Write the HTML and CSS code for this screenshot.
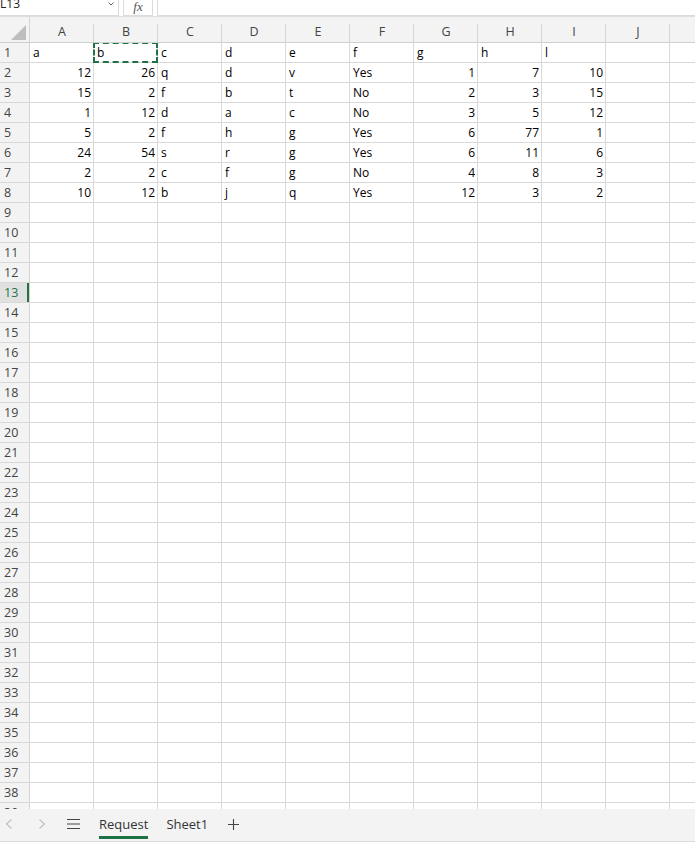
FILE: index.html
```html
<!DOCTYPE html>
<html>
<head>
<meta charset="utf-8">
<link rel="stylesheet" href="styles.css">
</head>
<body>
<div class="fbar">
  <div class="namebox"><span class="nametext">L13</span>
    <svg class="chev" width="6" height="4" viewBox="0 0 6 4"><path d="M0.5 0.5 L3 3 L5.5 0.5" fill="none" stroke="#666" stroke-width="1"/></svg>
  </div>
  <div class="fxbox"><span class="fx">fx</span></div>
  <div class="finput"></div>
</div>
<div class="colhead">
  <div class="corner"><svg width="16" height="15" viewBox="0 0 16 15"><path d="M15 0 L15 15 L0 15 Z" fill="#bdbdbd"/></svg></div>
  <div class="ch">A</div><div class="ch">B</div><div class="ch">C</div><div class="ch">D</div><div class="ch">E</div><div class="ch">F</div><div class="ch">G</div><div class="ch">H</div><div class="ch">I</div><div class="ch">J</div><div class="ch"></div>
</div>
<div class="grid">
  <div class="row"><span class="rh">1</span><span>a</span><span class="marq">b<i class="ants"></i></span><span>c</span><span>d</span><span>e</span><span>f</span><span>g</span><span>h</span><span>l</span><span></span><span></span></div>
  <div class="row"><span class="rh">2</span><span class="n">12</span><span class="n">26</span><span>q</span><span>d</span><span>v</span><span>Yes</span><span class="n">1</span><span class="n">7</span><span class="n">10</span><span></span><span></span></div>
  <div class="row"><span class="rh">3</span><span class="n">15</span><span class="n">2</span><span>f</span><span>b</span><span>t</span><span>No</span><span class="n">2</span><span class="n">3</span><span class="n">15</span><span></span><span></span></div>
  <div class="row"><span class="rh">4</span><span class="n">1</span><span class="n">12</span><span>d</span><span>a</span><span>c</span><span>No</span><span class="n">3</span><span class="n">5</span><span class="n">12</span><span></span><span></span></div>
  <div class="row"><span class="rh">5</span><span class="n">5</span><span class="n">2</span><span>f</span><span>h</span><span>g</span><span>Yes</span><span class="n">6</span><span class="n">77</span><span class="n">1</span><span></span><span></span></div>
  <div class="row"><span class="rh">6</span><span class="n">24</span><span class="n">54</span><span>s</span><span>r</span><span>g</span><span>Yes</span><span class="n">6</span><span class="n">11</span><span class="n">6</span><span></span><span></span></div>
  <div class="row"><span class="rh">7</span><span class="n">2</span><span class="n">2</span><span>c</span><span>f</span><span>g</span><span>No</span><span class="n">4</span><span class="n">8</span><span class="n">3</span><span></span><span></span></div>
  <div class="row"><span class="rh">8</span><span class="n">10</span><span class="n">12</span><span>b</span><span>j</span><span>q</span><span>Yes</span><span class="n">12</span><span class="n">3</span><span class="n">2</span><span></span><span></span></div>
  <div class="row"><span class="rh">9</span><span></span><span></span><span></span><span></span><span></span><span></span><span></span><span></span><span></span><span></span><span></span></div>
  <div class="row"><span class="rh">10</span><span></span><span></span><span></span><span></span><span></span><span></span><span></span><span></span><span></span><span></span><span></span></div>
  <div class="row"><span class="rh">11</span><span></span><span></span><span></span><span></span><span></span><span></span><span></span><span></span><span></span><span></span><span></span></div>
  <div class="row"><span class="rh">12</span><span></span><span></span><span></span><span></span><span></span><span></span><span></span><span></span><span></span><span></span><span></span></div>
  <div class="row sel"><span class="rh">13</span><span></span><span></span><span></span><span></span><span></span><span></span><span></span><span></span><span></span><span></span><span></span></div>
  <div class="row"><span class="rh">14</span><span></span><span></span><span></span><span></span><span></span><span></span><span></span><span></span><span></span><span></span><span></span></div>
  <div class="row"><span class="rh">15</span><span></span><span></span><span></span><span></span><span></span><span></span><span></span><span></span><span></span><span></span><span></span></div>
  <div class="row"><span class="rh">16</span><span></span><span></span><span></span><span></span><span></span><span></span><span></span><span></span><span></span><span></span><span></span></div>
  <div class="row"><span class="rh">17</span><span></span><span></span><span></span><span></span><span></span><span></span><span></span><span></span><span></span><span></span><span></span></div>
  <div class="row"><span class="rh">18</span><span></span><span></span><span></span><span></span><span></span><span></span><span></span><span></span><span></span><span></span><span></span></div>
  <div class="row"><span class="rh">19</span><span></span><span></span><span></span><span></span><span></span><span></span><span></span><span></span><span></span><span></span><span></span></div>
  <div class="row"><span class="rh">20</span><span></span><span></span><span></span><span></span><span></span><span></span><span></span><span></span><span></span><span></span><span></span></div>
  <div class="row"><span class="rh">21</span><span></span><span></span><span></span><span></span><span></span><span></span><span></span><span></span><span></span><span></span><span></span></div>
  <div class="row"><span class="rh">22</span><span></span><span></span><span></span><span></span><span></span><span></span><span></span><span></span><span></span><span></span><span></span></div>
  <div class="row"><span class="rh">23</span><span></span><span></span><span></span><span></span><span></span><span></span><span></span><span></span><span></span><span></span><span></span></div>
  <div class="row"><span class="rh">24</span><span></span><span></span><span></span><span></span><span></span><span></span><span></span><span></span><span></span><span></span><span></span></div>
  <div class="row"><span class="rh">25</span><span></span><span></span><span></span><span></span><span></span><span></span><span></span><span></span><span></span><span></span><span></span></div>
  <div class="row"><span class="rh">26</span><span></span><span></span><span></span><span></span><span></span><span></span><span></span><span></span><span></span><span></span><span></span></div>
  <div class="row"><span class="rh">27</span><span></span><span></span><span></span><span></span><span></span><span></span><span></span><span></span><span></span><span></span><span></span></div>
  <div class="row"><span class="rh">28</span><span></span><span></span><span></span><span></span><span></span><span></span><span></span><span></span><span></span><span></span><span></span></div>
  <div class="row"><span class="rh">29</span><span></span><span></span><span></span><span></span><span></span><span></span><span></span><span></span><span></span><span></span><span></span></div>
  <div class="row"><span class="rh">30</span><span></span><span></span><span></span><span></span><span></span><span></span><span></span><span></span><span></span><span></span><span></span></div>
  <div class="row"><span class="rh">31</span><span></span><span></span><span></span><span></span><span></span><span></span><span></span><span></span><span></span><span></span><span></span></div>
  <div class="row"><span class="rh">32</span><span></span><span></span><span></span><span></span><span></span><span></span><span></span><span></span><span></span><span></span><span></span></div>
  <div class="row"><span class="rh">33</span><span></span><span></span><span></span><span></span><span></span><span></span><span></span><span></span><span></span><span></span><span></span></div>
  <div class="row"><span class="rh">34</span><span></span><span></span><span></span><span></span><span></span><span></span><span></span><span></span><span></span><span></span><span></span></div>
  <div class="row"><span class="rh">35</span><span></span><span></span><span></span><span></span><span></span><span></span><span></span><span></span><span></span><span></span><span></span></div>
  <div class="row"><span class="rh">36</span><span></span><span></span><span></span><span></span><span></span><span></span><span></span><span></span><span></span><span></span><span></span></div>
  <div class="row"><span class="rh">37</span><span></span><span></span><span></span><span></span><span></span><span></span><span></span><span></span><span></span><span></span><span></span></div>
  <div class="row"><span class="rh">38</span><span></span><span></span><span></span><span></span><span></span><span></span><span></span><span></span><span></span><span></span><span></span></div>
  <div class="row"><span class="rh">39</span><span></span><span></span><span></span><span></span><span></span><span></span><span></span><span></span><span></span><span></span><span></span></div>
</div>
<div class="tabbar">
  <svg class="nav prev" width="8" height="10" viewBox="0 0 8 10"><path d="M6.5 0.5 L1.5 5 L6.5 9.5" fill="none" stroke="#bdbdbd" stroke-width="1.1"/></svg>
  <svg class="nav next" width="8" height="10" viewBox="0 0 8 10"><path d="M1.5 0.5 L6.5 5 L1.5 9.5" fill="none" stroke="#bdbdbd" stroke-width="1.1"/></svg>
  <svg class="menu" width="13" height="10" viewBox="0 0 13 10"><path d="M0 0.5 H13 M0 5 H13 M0 9.5 H13" stroke="#444" stroke-width="1.1"/></svg>
  <div class="tab active">Request</div>
  <div class="tab">Sheet1</div>
  <svg class="plus" width="11" height="11" viewBox="0 0 11 11"><path d="M5.5 0 V11 M0 5.5 H11" stroke="#444" stroke-width="1.1"/></svg>
</div>
</body>
</html>
```

FILE: styles.css
```css
html, body {
  margin: 0;
  padding: 0;
}
body {
  width: 695px;
  height: 843px;
  overflow: hidden;
  background: #fff;
  font-family: "Open Sans", "Noto Sans", sans-serif;
  color: #000;
}

/* formula bar */
.fbar {
  display: flex;
  height: 16px;
}
.namebox {
  width: 119px;
  height: 16px;
  box-sizing: border-box;
  border-right: 1px solid #dcdcdc;
  border-bottom: 1px solid #dcdcdc;
  position: relative;
  display: flex;
  justify-content: space-between;
  align-items: flex-start;
  overflow: hidden;
}
.nametext {
  font-size: 12px;
  line-height: 12px;
  margin-top: -2px;
  color: #222;
}
.chev {
  margin: 2px 4px 0 0;
}
.fxbox {
  margin-left: 4px;
  width: 30px;
  height: 16px;
  box-sizing: border-box;
  border: 1px solid #dcdcdc;
  border-top: none;
  display: flex;
  justify-content: center;
  overflow: hidden;
}
.fx {
  font-family: "Liberation Serif", serif;
  font-style: italic;
  font-size: 13px;
  line-height: 13px;
  color: #555;
}
.finput {
  margin-left: 4px;
  flex: 1;
  height: 16px;
  box-sizing: border-box;
  border-left: 1px solid #dcdcdc;
  border-bottom: 1px solid #dcdcdc;
}

/* column header */
.colhead {
  display: flex;
  height: 27px;
  box-sizing: border-box;
  border-top: 1px solid #dedede;
  border-bottom: 1px solid #cfcfcf;
  background: #f3f3f3;
  overflow: hidden;
}
.corner {
  flex: 0 0 30px;
  box-sizing: border-box;
  border-right: 1px solid #d3d3d3;
  display: flex;
  align-items: flex-end;
  justify-content: flex-end;
  padding: 0 2px 2px 0;
}
.ch {
  flex: 0 0 64px;
  box-sizing: border-box;
  position: relative;
  text-align: center;
  font-size: 12.5px;
  color: #444;
  padding-top: 4px;
  line-height: 21px;
}
.ch::after {
  content: "";
  position: absolute;
  right: 0;
  top: 7px;
  bottom: 0;
  width: 1px;
  background: #d3d3d3;
}

/* grid */
.grid {
  height: 766px;
  overflow: hidden;
}
.row {
  display: flex;
  height: 20px;
  box-sizing: border-box;
  border-bottom: 1px solid #d9d9d9;
}
.row > span {
  flex: 0 0 64px;
  box-sizing: border-box;
  border-right: 1px solid #d9d9d9;
  padding: 1px 2px 0 3px;
  font-size: 12px;
  line-height: 18px;
  white-space: nowrap;
  overflow: hidden;
  position: relative;
}
.row > span.n {
  text-align: right;
  padding: 1px 2px 0 2px;
}
.row > span.rh {
  flex: 0 0 30px;
  background: #f3f3f3;
  color: #444;
  padding-left: 4px;
  font-size: 12.5px;
  border-right-color: #d3d3d3;
}
.row.sel > span.rh {
  background: #e1e1e1;
  color: #217346;
  box-shadow: inset -2px 0 0 #217346;
}
.row > span.marq {
  overflow: visible;
}
.ants {
  position: absolute;
  left: -1px;
  top: -1px;
  right: -1px;
  bottom: -1px;
  border: 2px dashed #217346;
  pointer-events: none;
}

/* tab bar */
.tabbar {
  height: 33px;
  box-sizing: border-box;
  background: #f3f3f3;
  border-bottom: 1px solid #dcdcdc;
  padding-bottom: 2px;
  display: flex;
  align-items: center;
}
.nav.prev {
  margin-left: 5px;
}
.nav.next {
  margin-left: 25px;
}
.menu {
  margin-left: 21px;
}
.tab {
  align-self: stretch;
  display: flex;
  align-items: center;
  box-sizing: border-box;
  border-bottom: 3px solid transparent;
  padding-top: 2px;
  font-size: 13px;
  color: #333;
}
.tab.active {
  margin-left: 19px;
  border-bottom-color: #1e7145;
}
.tab + .tab {
  margin-left: 18px;
}
.plus {
  margin-left: 20px;
}
```
